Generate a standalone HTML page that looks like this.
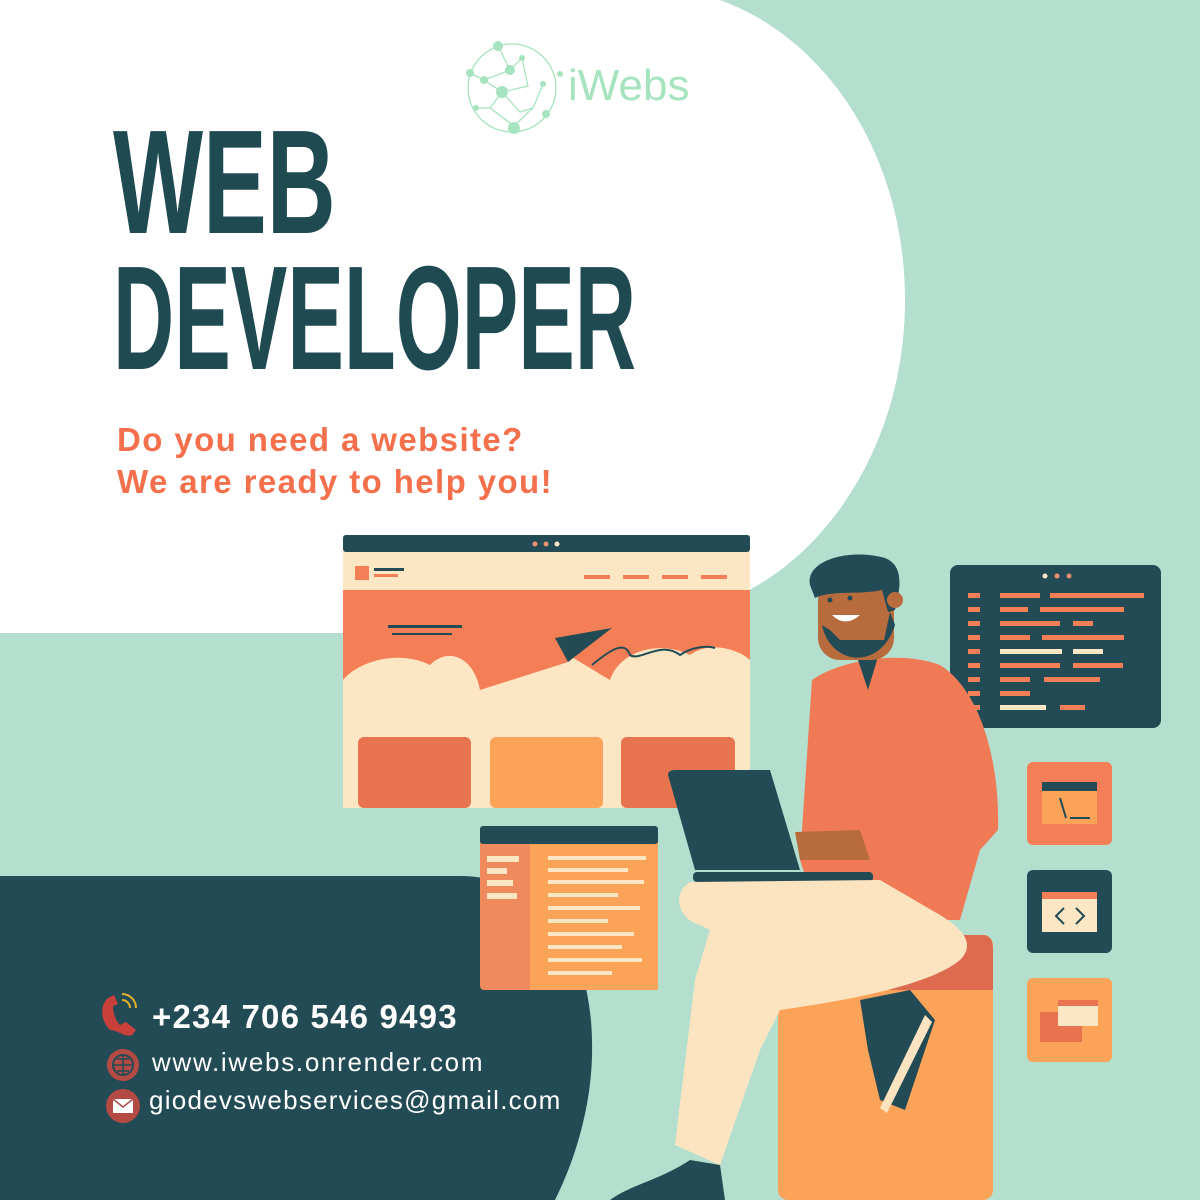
<!DOCTYPE html>
<html><head><meta charset="utf-8"><style>
html,body{margin:0;padding:0}
body{width:1200px;height:1200px;position:relative;overflow:hidden;background:#b4dfcf;font-family:"Liberation Sans",sans-serif}
svg{position:absolute;left:0;top:0}
.t{position:absolute;left:113px;color:#1f4a52;font-weight:bold;font-family:"Liberation Sans Narrow","Liberation Sans",sans-serif;transform-origin:0 0;white-space:nowrap;line-height:1}
.sub{position:absolute;left:117px;color:#f4704c;font-weight:bold;font-size:33px;letter-spacing:1.4px;line-height:42px;top:419px;white-space:nowrap}
.c{position:absolute;color:#fff;white-space:nowrap}
.logo{position:absolute;left:568px;top:64px;color:#a6e4bf;font-size:44px;line-height:1}
</style></head><body>
<svg width="1200" height="1200" viewBox="0 0 1200 1200">
<path d="M0 0 H720 C830 40 905 160 905 300 C905 440 830 550 745 592 L700 633 H0 Z" fill="#fff"/>
<path d="M0 876 H460 C540 876 590 940 592 1040 C594 1110 570 1170 555 1200 H0 Z" fill="#234b55"/>
<g stroke="#a6e4bf" stroke-width="1.3" fill="none">
<circle cx="512" cy="88" r="44"/>
<path d="M498 46 L510 70 L522 58 L528 86 L502 92 L484 80 L510 70 M484 80 L470 73 M502 92 L490 108 L514 126 L533 108 L543 84 M502 92 L520 112 L533 108 M490 108 L476 108"/>
</g>
<g fill="#a6e4bf"><circle cx="498" cy="46" r="5"/><circle cx="510" cy="70" r="5"/><circle cx="502" cy="92" r="6"/><circle cx="484" cy="80" r="4"/><circle cx="470" cy="73" r="4"/><circle cx="514" cy="128" r="6"/><circle cx="546" cy="114" r="4"/><circle cx="476" cy="108" r="3"/><circle cx="543" cy="84" r="3"/><circle cx="560" cy="74" r="3"/><circle cx="522" cy="58" r="3"/></g>
<rect x="343" y="535" width="407" height="273" fill="#fde6c4"/>
<rect x="343" y="535" width="407" height="17" rx="3" fill="#234b55"/>
<circle cx="535" cy="544" r="2.5" fill="#f2916e"/><circle cx="546" cy="544" r="2.5" fill="#f2916e"/><circle cx="557" cy="544" r="2.5" fill="#fde6c4"/>
<rect x="355" y="566" width="14" height="14" fill="#f47f56"/><rect x="374" y="568" width="30" height="3" fill="#234b55"/><rect x="374" y="574" width="24" height="3" fill="#f47f56"/>
<g fill="#f47f56"><rect x="584" y="575" width="26" height="4"/><rect x="623" y="575" width="26" height="4"/><rect x="662" y="575" width="26" height="4"/><rect x="701" y="575" width="26" height="4"/></g>
<rect x="343" y="590" width="407" height="118" fill="#f47f56"/>
<path d="M343 708 V680 C360 660 400 650 430 665 C450 645 475 660 480 690 L560 650 L610 680 C620 650 660 640 690 655 C710 640 740 650 750 660 V708 Z" fill="#fde6c4"/>
<path d="M480 690 L570 640 L612 628 L568 662 Z" fill="#f47f56"/>
<path d="M555 638 L612 628 L568 662 Z" fill="#234b55"/>
<path d="M592 665 C610 650 625 640 630 655 C640 662 660 640 680 655 C690 648 705 645 715 648" stroke="#234b55" stroke-width="2" fill="none"/>
<rect x="388" y="625" width="74" height="3" fill="#234b55"/><rect x="392" y="633" width="60" height="2" fill="#234b55"/>
<rect x="358" y="737" width="113" height="71" rx="6" fill="#e8734f"/>
<rect x="490" y="737" width="113" height="71" rx="6" fill="#fca35a"/>
<rect x="621" y="737" width="114" height="71" rx="6" fill="#e8734f"/>
<rect x="950" y="565" width="211" height="163" rx="8" fill="#234b55"/>
<g fill="#f47f56">
<rect x="968" y="593" width="12" height="5"/><rect x="968" y="607" width="12" height="5"/><rect x="968" y="621" width="12" height="5"/><rect x="968" y="635" width="12" height="5"/><rect x="968" y="649" width="12" height="5"/><rect x="968" y="663" width="12" height="5"/><rect x="968" y="677" width="12" height="5"/><rect x="968" y="691" width="12" height="5"/><rect x="968" y="705" width="12" height="5"/>
<rect x="1000" y="593" width="40" height="5"/><rect x="1050" y="593" width="94" height="5"/>
<rect x="1000" y="607" width="28" height="5"/><rect x="1040" y="607" width="84" height="5"/>
<rect x="1000" y="621" width="60" height="5"/><rect x="1073" y="621" width="20" height="5"/>
<rect x="1000" y="635" width="30" height="5"/><rect x="1042" y="635" width="82" height="5"/>
<rect x="1000" y="663" width="60" height="5"/><rect x="1073" y="663" width="50" height="5"/>
<rect x="1000" y="677" width="30" height="5"/><rect x="1044" y="677" width="56" height="5"/>
<rect x="1000" y="691" width="30" height="5"/><rect x="1060" y="705" width="25" height="5"/>
</g>
<g fill="#fde6c4"><rect x="1000" y="649" width="62" height="5"/><rect x="1073" y="649" width="30" height="5"/><rect x="1000" y="705" width="46" height="5"/></g>
<circle cx="1045" cy="576" r="2.5" fill="#fde6c4"/><circle cx="1057" cy="576" r="2.5" fill="#f2916e"/><circle cx="1069" cy="576" r="2.5" fill="#f2916e"/>
<rect x="480" y="826" width="178" height="164" rx="4" fill="#f08a5c"/>
<rect x="480" y="826" width="178" height="18" rx="3" fill="#234b55"/>
<rect x="530" y="844" width="128" height="146" fill="#fca35a"/>
<g fill="#fde6c4"><rect x="487" y="856" width="32" height="6"/><rect x="487" y="868" width="20" height="6"/><rect x="487" y="880" width="26" height="6"/><rect x="487" y="893" width="30" height="6"/>
<rect x="548" y="856" width="98" height="4"/><rect x="548" y="868" width="80" height="4"/><rect x="548" y="880" width="96" height="4"/><rect x="548" y="893" width="70" height="4"/><rect x="548" y="906" width="92" height="4"/><rect x="548" y="919" width="60" height="4"/><rect x="548" y="932" width="86" height="4"/><rect x="548" y="945" width="74" height="4"/><rect x="548" y="958" width="94" height="4"/><rect x="548" y="971" width="64" height="4"/></g>
<rect x="1027" y="762" width="85" height="83" rx="6" fill="#f47f56"/>
<rect x="1042" y="782" width="55" height="42" fill="#fca35a"/><rect x="1042" y="782" width="55" height="9" fill="#234b55"/>
<path d="M1060 798 L1066 818 M1070 818 H1090" stroke="#234b55" stroke-width="2"/>
<rect x="1027" y="870" width="85" height="83" rx="6" fill="#234b55"/>
<rect x="1042" y="892" width="55" height="40" fill="#fde6c4"/><rect x="1042" y="892" width="55" height="7" fill="#f47f56"/>
<path d="M1064 908 L1056 916 L1064 924 M1076 908 L1084 916 L1076 924" stroke="#234b55" stroke-width="2" fill="none"/>
<rect x="1027" y="978" width="85" height="84" rx="6" fill="#fca35a"/>
<rect x="1040" y="1012" width="42" height="30" fill="#e8734f"/><rect x="1058" y="1000" width="40" height="26" fill="#fde6c4"/><rect x="1058" y="1000" width="40" height="6" fill="#e8734f"/>
<rect x="778" y="935" width="215" height="265" rx="10" fill="#fca35a"/>
<path d="M778 945 Q778 935 790 935 H983 Q993 935 993 950 V990 H778 Z" fill="#de6a50"/>
<path d="M812 680 C840 660 900 650 940 665 C980 690 1000 760 998 830 L980 850 L960 920 L820 920 L800 860 Z" fill="#ef7a55"/>
<path d="M858 660 L880 650 L868 690 Z" fill="#234b55"/>
<rect x="818" y="578" width="76" height="82" rx="22" fill="#b86c3e"/>
<path d="M810 585 C805 560 850 548 885 558 C905 566 900 590 895 610 L888 612 L882 590 C860 595 830 590 815 598 Z" fill="#234b55"/>
<circle cx="895" cy="600" r="8" fill="#b86c3e"/>
<path d="M822 625 C830 665 880 672 895 625 L890 612 L884 640 L840 640 L830 630 Z" fill="#234b55"/>
<path d="M832 615 Q845 628 860 615 Z" fill="#fff"/>
<circle cx="830" cy="600" r="2.5" fill="#234b55"/><circle cx="850" cy="598" r="2.5" fill="#234b55"/>
<path d="M795 832 L860 830 L870 860 L800 860 Z" fill="#b86c3e"/>
<path d="M668 775 Q668 770 675 770 H770 L800 870 H695 Z" fill="#234b55"/>
<rect x="693" y="872" width="180" height="10" rx="4" fill="#234b55"/>
<path d="M690 882 C670 895 680 920 700 925 L710 930 L695 980 L675 1145 L720 1165 L760 1050 L780 1010 C850 1000 930 985 960 960 C975 945 965 930 940 915 L880 880 Z" fill="#fde4c0"/>
<path d="M860 1000 L910 990 L935 1020 L905 1110 L880 1100 L868 1050 Z" fill="#234b55"/>
<path d="M925 1015 L932 1022 L887 1113 L880 1108 Z" fill="#fde4c0"/>
<path d="M690 1160 L720 1165 L725 1200 L610 1200 C630 1185 660 1180 690 1160 Z" fill="#234b55"/>
</svg>
<div class="logo">iWebs</div>
<div class="t" style="top:109px;font-size:148px;transform:scaleX(0.645)">WEB</div>
<div class="t" style="top:245px;font-size:148px;transform:scaleX(0.573)">DEVELOPER</div>
<div class="sub">Do you need a website?<br>We are ready to help you!</div>
<svg width="1200" height="1200" viewBox="0 0 1200 1200" style="pointer-events:none">
<path d="M108 998 C100 1005 100 1020 110 1030 C118 1030 125 1038 132 1035 L136 1030 L126 1022 L120 1025 C115 1020 113 1012 113 1006 L118 1004 L114 995 Z" fill="#c9403a"/>
<path d="M122 1000 A8 8 0 0 1 130 1008 M122 994 A14 14 0 0 1 136 1008" stroke="#e3b02a" stroke-width="2" fill="none"/>
<circle cx="123" cy="1065" r="16" fill="#b34a43"/>
<circle cx="123" cy="1065" r="10" fill="none" stroke="#234b55" stroke-width="2"/>
<path d="M113 1065 H133 M123 1055 V1075 M117 1059 H129 M117 1071 H129" stroke="#234b55" stroke-width="1.5"/>
<circle cx="123" cy="1106" r="17" fill="#b34a43"/>
<rect x="113" y="1099" width="20" height="14" fill="#fff"/>
<path d="M113 1099 L123 1107 L133 1099" stroke="#b34a43" stroke-width="1.5" fill="none"/>
</svg>
<div class="c" style="left:152px;top:998px;font-size:33px;font-weight:bold;letter-spacing:1.2px">+234 706 546 9493</div>
<div class="c" style="left:152px;top:1047px;font-size:26px;letter-spacing:1.7px">www.iwebs.onrender.com</div>
<div class="c" style="left:149px;top:1085px;font-size:26px;letter-spacing:1.25px">giodevswebservices@gmail.com</div>
</body></html>
